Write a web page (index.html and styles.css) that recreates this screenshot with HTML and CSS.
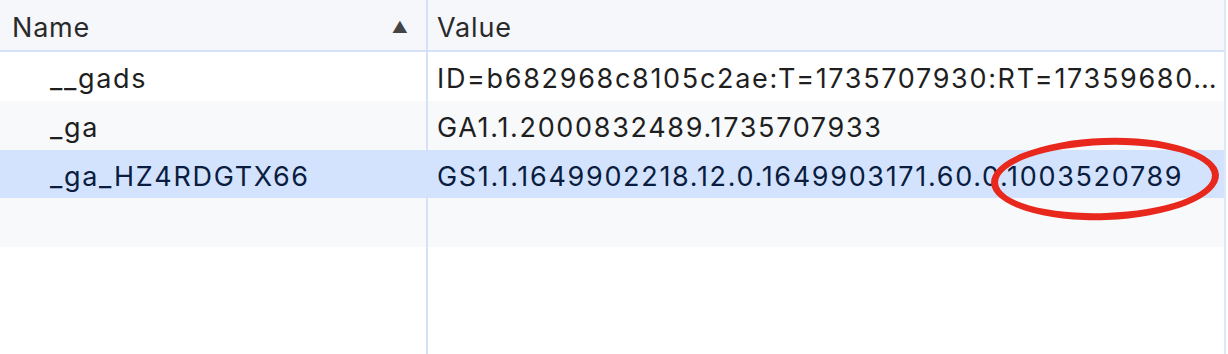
FILE: index.html
```html
<!DOCTYPE html>
<html lang="en">
<head>
    <meta charset="UTF-8">
    <title>Cookies</title>
    <link rel="stylesheet" href="styles.css">
</head>
<body>

<div class="table">
    <div class="row head">
        <div class="cell name">Name <span class="sort">&#9650;</span></div>
        <div class="cell value">Value</div>
    </div>
    <div class="row">
        <div class="cell name indent">__gads</div>
        <div class="cell value">ID=b682968c8105c2ae:T=1735707930:RT=17359680…</div>
    </div>
    <div class="row alt">
        <div class="cell name indent">_ga</div>
        <div class="cell value">GA1.1.2000832489.1735707933</div>
    </div>
    <div class="row selected">
        <div class="cell name indent">_ga_HZ4RDGTX66</div>
        <div class="cell value">GS1.1.1649902218.12.0.1649903171.60.0.1003520789</div>
    </div>
    <div class="row alt">
        <div class="cell name"></div>
        <div class="cell value"></div>
    </div>
    <div class="row filler">
        <div class="cell name"></div>
        <div class="cell value"></div>
    </div>
    <div class="circle"></div>
</div>

</body>
</html>
```

FILE: styles.css
```css
body {
    margin: 0;
    padding: 0;
    background: #fff;
    font-family: Inter, "Noto Sans", sans-serif;
    color: #1f1f1f;
}
.table {
    position: relative;
    width: 1224px;
    height: 354px;
    display: flex;
    flex-direction: column;
    border-right: 2px solid #dde6f8;
    overflow: hidden;
}
.row {
    display: flex;
    height: 49px;
    flex-shrink: 0;
}
.row.head {
    height: 50px;
    background: #f5f7fb;
    border-bottom: 2px solid #d5e1f8;
}
.row.alt {
    background: #f8f9fb;
}
.row.selected {
    height: 48px;
    background: #d3e3fd;
    color: #0b1d3f;
}
.row.filler {
    flex: 1;
}
.cell {
    display: flex;
    align-items: center;
    box-sizing: border-box;
    padding-top: 4px;
    font-size: 27px;
    letter-spacing: 0.062em;
    white-space: nowrap;
    overflow: hidden;
}
.cell.name {
    width: 428px;
    padding-left: 12px;
    border-right: 2px solid #d5e1f8;
}
.cell.name.indent {
    padding-left: 50px;
}
.cell.value {
    flex: 1;
    padding-left: 9px;
}
.head .cell {
    color: #2a2a2a;
    letter-spacing: 0.03em;
}
.head .cell.name {
    justify-content: space-between;
}
.sort {
    font-size: 16px;
    color: #444;
    letter-spacing: 0;
    margin-right: 18px;
}
.circle {
    position: absolute;
    left: 991px;
    top: 138px;
    width: 214px;
    height: 68px;
    border: 7px solid #e8281c;
    border-radius: 50%;
    transform: rotate(-2deg);
}
```
